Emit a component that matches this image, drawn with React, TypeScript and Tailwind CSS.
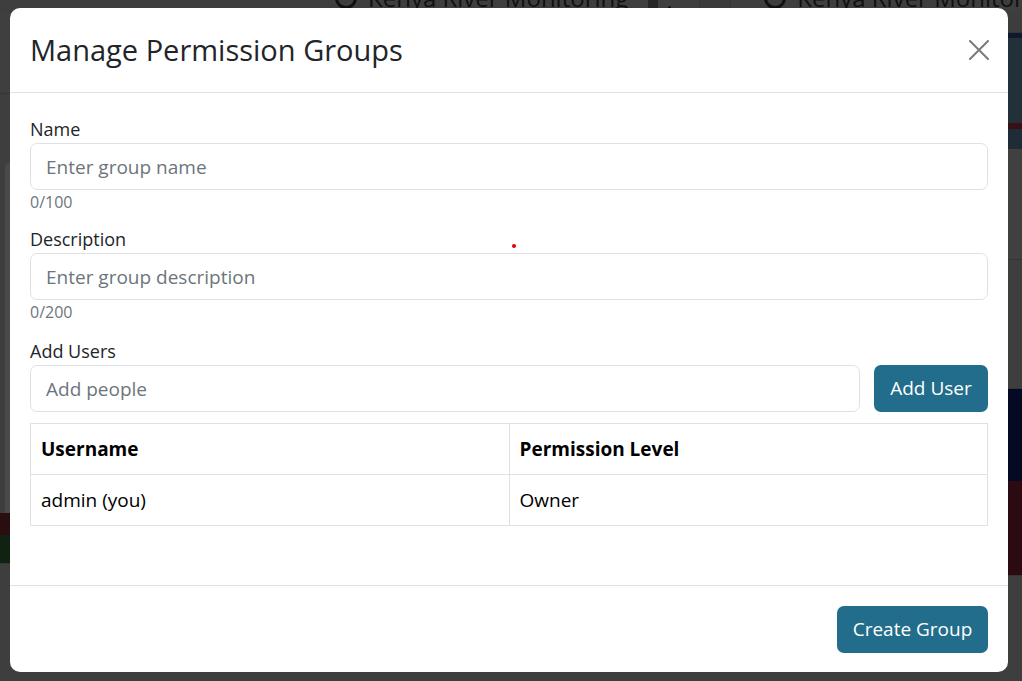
import { useState } from "react";

const users = [{ name: "admin (you)", level: "Owner" }];

function CloseIcon() {
  return (
    <svg width="20" height="20" viewBox="0 0 20 20" fill="none">
      <path d="M1 1L19 19M19 1L1 19" stroke="#7a7a7a" strokeWidth="2" strokeLinecap="round" />
    </svg>
  );
}

function CardTitle() {
  return (
    <div className="flex shrink-0 items-center gap-[11px]">
      <span className="h-[22px] w-[22px] shrink-0 rounded-full border-[3px] border-[#101010]" />
      <span className="whitespace-nowrap">Kenya River Monitoring</span>
    </div>
  );
}

function Backdrop() {
  return (
    <div className="flex h-[681px] flex-col overflow-hidden bg-[#3e3e3e]">
      {/* card titles peeking above the modal */}
      <div className="-mt-[17px] flex h-[30px] shrink-0 items-center pl-[335px] text-[24px] leading-[30px] text-[#101010]">
        <CardTitle />
        <div className="ml-[20px] h-[30px] w-[10px] shrink-0 bg-[#262626]" />
        <div className="ml-[10px] flex h-[30px] items-end pb-[4px]">
          <span className="h-[3px] w-[3px] rounded-full bg-[#101010]" />
        </div>
        <div className="ml-[28px] h-[30px] w-[32px] shrink-0 border-x border-[#353535] bg-[#3a3a3a]" />
        <div className="ml-[33px]">
          <CardTitle />
        </div>
      </div>
      <div className="flex flex-1 justify-between">
        <div className="flex w-[10px] flex-col">
          <div className="h-[80px] bg-[#3f3f3f]" />
          <div className="h-[70px] border-t border-[#353535] bg-[#3e3e3e]" />
          <div className="ml-[5px] h-[350px] rounded-tl-[6px] bg-[#4a4a4a]" />
          <div className="h-[22px] bg-[#2a0d10]" />
          <div className="h-[28px] bg-[#102312]" />
          <div className="flex-1 border-t border-[#353535] bg-[#3e3e3e]" />
        </div>
        <div className="flex w-[14px] flex-col">
          <div className="h-[20px] border-b border-[#353535] bg-[#3d3d3d]" />
          <div className="h-[5px] bg-[#0c1a2b]" />
          <div className="h-[85px] bg-[#22303a]" />
          <div className="h-[6px] bg-[#3a1016]" />
          <div className="h-[20px] bg-[#1e2c37]" />
          <div className="h-[110px] bg-[#404040]" />
          <div className="h-[130px] border-y border-[#353535] bg-[#3e3e3e]" />
          <div className="h-[92px] bg-[#050a24]" />
          <div className="h-[94px] bg-[#2b0a12]" />
          <div className="flex-1 border-t border-[#353535] bg-[#3e3e3e]" />
        </div>
      </div>
    </div>
  );
}

export default function App() {
  const [name, setName] = useState("");
  const [description, setDescription] = useState("");
  const [person, setPerson] = useState("");

  return (
    <div className="relative h-[681px] w-full overflow-hidden font-['Open_Sans',sans-serif]">
      <Backdrop />

      {/* Modal */}
      <div className="absolute left-[10px] top-[8px] flex h-[664px] w-[998px] flex-col rounded-[10px] bg-white">
        <div className="flex h-[85px] shrink-0 items-center justify-between border-b border-[#dee2e6] pl-[20px] pr-[19px]">
          <h2 className="text-[29px] font-medium leading-[34px] text-[#212529]">Manage Permission Groups</h2>
          <button className="flex h-[20px] w-[20px] items-center justify-center">
            <CloseIcon />
          </button>
        </div>

        <div className="relative flex-1 px-[20px] pt-[23px]">
          <label className="block text-[18px] leading-[27px] text-[#212529]">Name</label>
          <input
            value={name}
            onChange={(e) => setName(e.target.value)}
            placeholder="Enter group name"
            className="block h-[47px] w-full rounded-[7px] border border-[#dee2e6] px-[15px] text-[19px] text-[#212529] outline-none placeholder:text-[#6c757d]"
          />
          <div className="mt-[2px] text-[16px] leading-[20px] text-[#6c757d]">{name.length}/100</div>

          <label className="mt-[14px] block text-[18px] leading-[27px] text-[#212529]">Description</label>
          <input
            value={description}
            onChange={(e) => setDescription(e.target.value)}
            placeholder="Enter group description"
            className="block h-[47px] w-full rounded-[7px] border border-[#dee2e6] px-[15px] text-[19px] text-[#212529] outline-none placeholder:text-[#6c757d]"
          />
          <div className="mt-[2px] text-[16px] leading-[20px] text-[#6c757d]">{description.length}/200</div>

          <label className="mt-[16px] block text-[18px] leading-[27px] text-[#212529]">Add Users</label>
          <div className="flex gap-[14px]">
            <input
              value={person}
              onChange={(e) => setPerson(e.target.value)}
              placeholder="Add people"
              className="block h-[47px] flex-1 rounded-[7px] border border-[#dee2e6] px-[15px] text-[19px] text-[#212529] outline-none placeholder:text-[#6c757d]"
            />
            <button className="h-[47px] w-[114px] rounded-[7px] bg-[#216d8b] text-[19px] text-white">Add User</button>
          </div>

          <table className="mt-[11px] w-full table-fixed border-collapse text-[19px] text-black">
            <thead>
              <tr>
                <th className="h-[51px] border border-[#dee2e6] px-[10px] text-left font-bold">Username</th>
                <th className="h-[51px] border border-[#dee2e6] px-[10px] text-left font-bold">Permission Level</th>
              </tr>
            </thead>
            <tbody>
              {users.map((u) => (
                <tr key={u.name}>
                  <td className="h-[51px] border border-[#dee2e6] px-[10px]">{u.name}</td>
                  <td className="h-[51px] border border-[#dee2e6] px-[10px]">{u.level}</td>
                </tr>
              ))}
            </tbody>
          </table>

          <span className="absolute left-[502px] top-[151px] h-[4px] w-[4px] rounded-full bg-[#e00000]" />
        </div>

        <div className="flex h-[87px] shrink-0 items-start justify-end border-t border-[#dee2e6] pr-[20px] pt-[20px]">
          <button className="h-[47px] w-[151px] rounded-[7px] bg-[#216d8b] text-[19px] text-white">Create Group</button>
        </div>
      </div>
    </div>
  );
}
